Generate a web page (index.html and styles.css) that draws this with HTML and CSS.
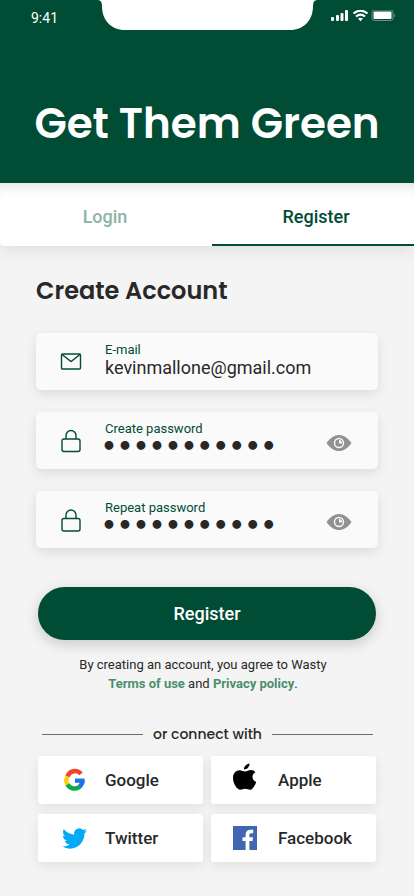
FILE: index.html
```html
<!DOCTYPE html>
<html lang="en">
<head>
<meta charset="utf-8">
<meta name="viewport" content="width=device-width, initial-scale=1">
<title>Get Them Green</title>
<link rel="stylesheet" href="styles.css">
</head>
<body>
<header class="hero">
  <div class="status">
    <span class="time">9:41</span>
    <svg class="status-icons" width="64" height="12" viewBox="0 0 64 12" fill="#fff" aria-hidden="true">
      <rect x="0" y="7" width="3" height="4" rx="1"/>
      <rect x="5" y="5" width="3" height="6" rx="1"/>
      <rect x="9.500" y="3" width="3" height="8" rx="1"/>
      <rect x="14" y="0" width="3" height="11" rx="1"/>
      <path d="M22.500 3.600Q29.500-2.400 36.500 3.600" fill="none" stroke="#fff" stroke-width="2"/>
      <path d="M25 6.500Q29.500 2.700 34 6.500" fill="none" stroke="#fff" stroke-width="2"/>
      <path d="M27 8.600Q29.500 6.900 32 8.600L29.500 11.200z"/>
      <rect x="41" y="0" width="21" height="10.500" rx="2.500" fill="none" stroke="#fff" stroke-opacity=".4"/>
      <rect x="42.500" y="1.500" width="18" height="7.500" rx="1"/>
      <path d="M63 3.500q1.500 2 0 4z" opacity=".5"/>
    </svg>
  </div>
  <svg class="notch" width="220" height="30" viewBox="0 0 220 30" fill="#fff" aria-hidden="true"><path d="M1 0Q5 0 5 6C5 20 14 30 28 30H193C207 30 216 20 216 6Q216 0 220 0z"/></svg>
  <h1 class="brand">Get Them Green</h1>
</header>
<nav class="tabs">
  <a class="tab" href="#login">Login</a>
  <a class="tab active" href="#register" aria-current="page">Register</a>
</nav>
<main class="content">
  <h2 class="heading">Create Account</h2>
  <form class="form">
    <div class="field">
      <svg class="field-icon" width="22" height="24" viewBox="0 0 22 24" fill="none" stroke="#004c34" stroke-width="1.400" aria-hidden="true"><rect x="1.500" y="4" width="19" height="15" rx="1"/><path d="M2 4.500l9 7 9-7"/></svg>
      <div class="field-body">
        <label for="email">E-mail</label>
        <input id="email" type="email" value="kevinmallone@gmail.com">
      </div>
    </div>
    <div class="field">
      <svg class="field-icon" width="22" height="24" viewBox="0 0 22 24" fill="none" stroke="#004c34" stroke-width="1.400" aria-hidden="true"><rect x="2" y="10" width="18" height="12.500" rx="2"/><path d="M6 10V6.500a5 5 0 0 1 10 0V10"/></svg>
      <div class="field-body">
        <label for="password">Create password</label>
        <input id="password" class="secret" type="password" value="greenplanet">
      </div>
      <button class="reveal" type="button" aria-label="Show password">
        <svg width="26" height="18" viewBox="0 0 26 18" aria-hidden="true"><path d="M.500 9C8-1.700 18-1.700 25.500 9 18 19.700 8 19.700.500 9z" fill="#919191"/><circle cx="13" cy="9" r="4.500" fill="none" stroke="#fafafa" stroke-width="1.400"/><path d="M13 6V9.500H16A3 3 0 0 0 13 6z" fill="#fafafa"/></svg>
      </button>
    </div>
    <div class="field">
      <svg class="field-icon" width="22" height="24" viewBox="0 0 22 24" fill="none" stroke="#004c34" stroke-width="1.400" aria-hidden="true"><rect x="2" y="10.500" width="18" height="12.500" rx="2"/><path d="M6 10V7a5 5 0 0 1 10 0v3"/></svg>
      <div class="field-body">
        <label for="repeat">Repeat password</label>
        <input id="repeat" class="secret" type="password" value="greenplanet">
      </div>
      <button class="reveal" type="button" aria-label="Show repeated password">
        <svg width="26" height="18" viewBox="0 0 26 18" aria-hidden="true"><path d="M.500 9C8-1.700 18-1.700 25.500 9 18 19.700 8 19.700.500 9z" fill="#919191"/><circle cx="13" cy="9" r="4.500" fill="none" stroke="#fafafa" stroke-width="1.400"/><path d="M13 6V9.500H16A3 3 0 0 0 13 6z" fill="#fafafa"/></svg>
      </button>
    </div>
    <button class="submit" type="submit">Register</button>
  </form>
  <p class="legal">By creating an account, you agree to Wasty<br><a href="#terms">Terms of use</a> and <a href="#privacy">Privacy policy</a>.</p>
  <p class="divider">or connect with</p>
  <div class="social">
    <button type="button"><svg width="26" height="26" viewBox="-1 -1 27 27" aria-hidden="true"><g fill="none" stroke-width="4.600"><path d="M19.800 6.100A8.300 8.300 0 0 0 5.700 8.900" stroke="#f04427"/><path d="M5.700 8.900A8.300 8.300 0 0 0 5.700 17.100" stroke="#fdd206"/><path d="M5.700 17.100A8.300 8.300 0 0 0 18.500 19.300" stroke="#0fa84d"/><path d="M18.300 19.500A8.300 8.300 0 0 0 21.300 13.500" stroke="#1a73e8"/></g><path d="M13.500 11H23.500V15.400H13.500z" fill="#1a73e8"/></svg><span>Google</span></button>
    <button type="button"><svg class="apple" width="26" height="28" viewBox="2 0 26 28" overflow="visible" aria-hidden="true"><path d="M17.500.500c.300 2.700-2.200 6-5.500 5.900C11.800 3.600 14.400.900 17.500.500zM23.300 9.300c-4.100 2.500-3.600 7.900.900 9.600-1.400 4-3.800 7.900-6.200 7.900-1.800 0-2.600-1-4.800-1s-3 1-4.800 1C4.800 26.800 1 20.400 1 15.100 1 10.100 4.100 7.200 7.600 7.200c2.200 0 3.700 1.300 5.300 1.300 1.500 0 3.500-1.400 6-1.400 1.800 0 3.400.800 4.400 2.200z"/></svg><span>Apple</span></button>
    <button type="button"><svg width="26" height="26" viewBox="-1 -1 25 25" fill="#03a9f4" aria-hidden="true"><path d="M23.950 4.570a10 10 0 0 1-2.820.770 4.960 4.960 0 0 0 2.160-2.720c-.950.550-2 .950-3.130 1.180a4.920 4.920 0 0 0-8.380 4.480C7.690 8.090 4.070 6.130 1.640 3.160a4.820 4.820 0 0 0-.670 2.480c0 1.710.870 3.210 2.190 4.100a4.900 4.900 0 0 1-2.230-.620v.060a4.920 4.920 0 0 0 3.950 4.830 5 5 0 0 1-2.210.080 4.940 4.940 0 0 0 4.600 3.420A9.870 9.870 0 0 1 0 19.540a13.990 13.990 0 0 0 7.560 2.210c9.050 0 13.990-7.500 13.990-13.980 0-.210 0-.420-.020-.630a9.940 9.940 0 0 0 2.460-2.550z"/></svg><span>Twitter</span></button>
    <button type="button"><svg width="26" height="26" viewBox="2 1 26 26" overflow="visible" aria-hidden="true"><path d="M1 2H25V26H1z" fill="#4267b2"/><path d="M13.600 26V17H10.500V13.300H13.600V10.600C13.600 7.400 15.500 5.700 18.400 5.700H21.200V9.200H19.300C17.800 9.200 17.400 10 17.400 11V13.300H21L20.500 17H17.400V26z" fill="#fff"/></svg><span>Facebook</span></button>
  </div>
</main>
</body>
</html>
```
FILE: styles.css
```css
* {
  box-sizing: border-box;
}

body {
  margin: 0;
  background: #f4f4f4;
  color: #282828;
  font-family: Roboto, sans-serif;
}

button,
input {
  font-family: inherit;
  color: inherit;
  border: 0;
  padding: 0;
  background: none;
}

h1,
h2,
p {
  margin: 0;
}

.hero {
  position: relative;
  background: #004c34;
  color: #fff;
  padding-bottom: 27px;
}

.status {
  display: flex;
  justify-content: space-between;
  padding: 10px 19px 0 31px;
  height: 36px;
}

.time {
  font-size: 14px;
  line-height: 16px;
}

.notch {
  position: absolute;
  top: 0;
  left: 50%;
  transform: translateX(-50%);
}

.brand {
  margin-top: 56px;
  font: 600 42px/64px Poppins, Inter, sans-serif;
  text-align: center;
  white-space: nowrap;
}

.tabs {
  display: grid;
  grid-template-columns: 212fr 202fr;
  height: 63px;
  background: #fff;
  border-radius: 0 0 4px 4px;
  box-shadow: 0 6px 16px rgba(0, 0, 0, 0.08), inset 0 12px 14px -10px rgba(0, 0, 0, 0.14);
}

.tab {
  display: flex;
  align-items: center;
  justify-content: center;
  padding: 4px 2px 0 0;
  font-size: 18px;
  font-weight: 500;
  color: #8db3a5;
  text-decoration: none;
}

.tab.active {
  padding: 6px 0 0 6px;
  color: #004c34;
  border-bottom: 2px solid #004c34;
}

.content {
  padding: 27px 36px 34px;
}

.heading {
  font: 600 24px/36px Poppins, Inter, sans-serif;
}

.form {
  display: flex;
  flex-direction: column;
  gap: 22px;
  margin-top: 24px;
}

.field {
  display: flex;
  align-items: center;
  height: 57px;
  padding: 0 26px 0 24px;
  border-radius: 5px;
  background: #fafafa;
  box-shadow: 0 4px 12px rgba(0, 0, 0, 0.1);
}

.field-icon {
  flex: none;
  margin-right: 23px;
}

.field-body {
  flex: 1;
  min-width: 0;
  padding-bottom: 3px;
}

.field label {
  display: block;
  font-size: 13px;
  line-height: 15px;
  color: #004c34;
}

.field input {
  display: block;
  width: 100%;
  height: 22px;
  font-size: 18px;
  outline: 0;
}

.field .secret {
  margin-left: -4px;
  font: 700 25px/22px "DejaVu Sans", sans-serif;
}

.reveal {
  display: flex;
  padding-top: 4px;
}

.submit {
  height: 53px;
  margin: 17px 2px 0;
  border-radius: 27px;
  background: #004c34;
  color: #fff;
  font-size: 18px;
  font-weight: 500;
  box-shadow: 0 4px 14px rgba(0, 0, 0, 0.18);
}

.legal {
  margin-top: 15px;
  padding-right: 8px;
  font-size: 13px;
  line-height: 19px;
  text-align: center;
}

.legal a {
  color: #4a8f6d;
  font-weight: 700;
  text-decoration: none;
}

.divider {
  display: flex;
  align-items: center;
  gap: 10px;
  margin: 30px 5px 0 6px;
  font: 500 14px/22px Poppins, Inter, sans-serif;
  white-space: nowrap;
}

.divider::before,
.divider::after {
  content: "";
  flex: 1;
  height: 1px;
  background: #6c6c6c;
}

.social {
  display: grid;
  grid-template-columns: 1fr 1fr;
  gap: 10px 8px;
  margin: 11px 2px 0;
}

.social button {
  display: flex;
  align-items: center;
  gap: 18px;
  height: 48px;
  padding: 0 21px 0 23px;
  border-radius: 3px;
  background: #fff;
  box-shadow: 0 4px 12px rgba(0, 0, 0, 0.08);
  font-size: 17px;
  font-weight: 500;
}

.apple {
  margin-bottom: 6px;
}
```
